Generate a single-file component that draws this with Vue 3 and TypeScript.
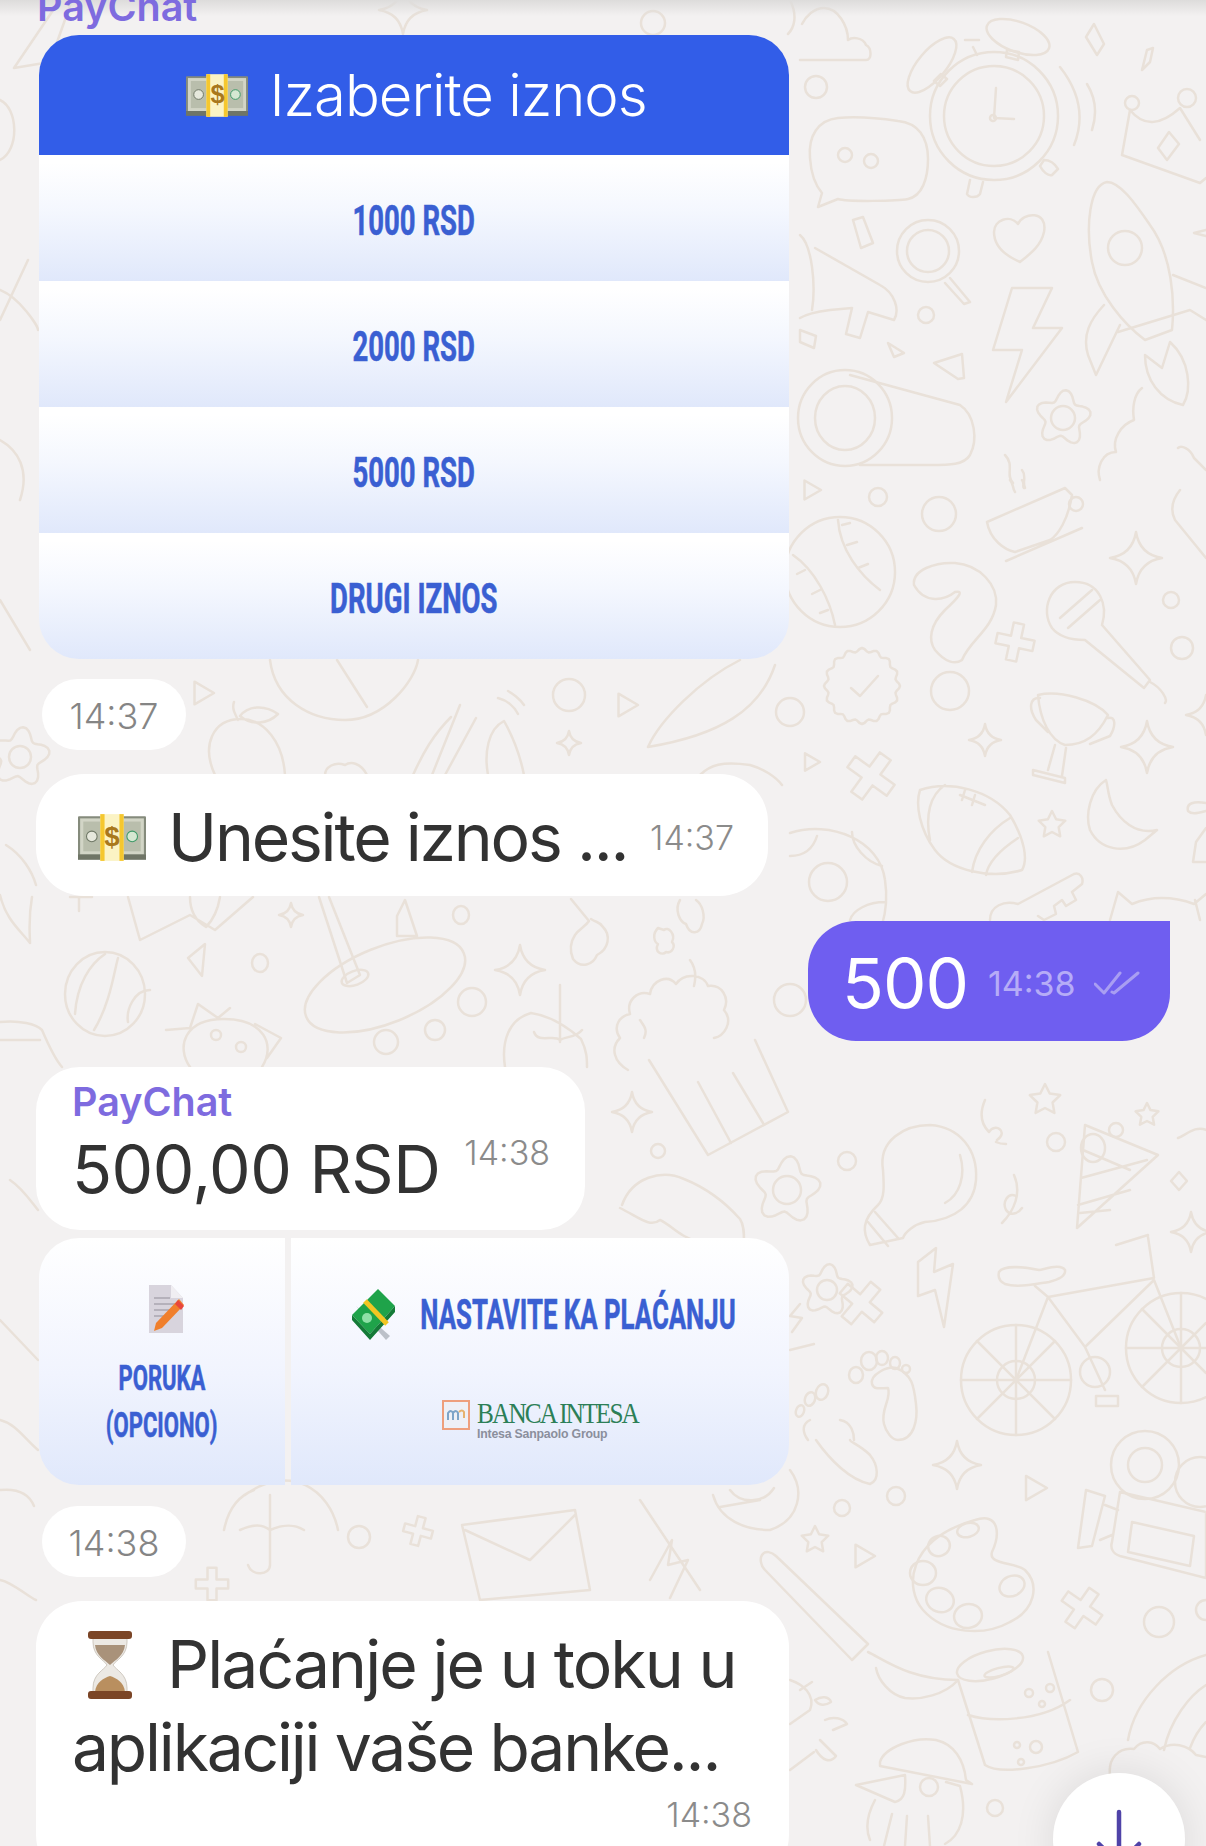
<template>
  <div class="page">
    <!-- chat wallpaper -->
    <svg class="wall" viewBox="0 0 1206 1846" width="1206" height="1846" fill="none">
      <g stroke="#e9e1d9" stroke-width="2.5" stroke-linejoin="round" stroke-linecap="round">
        <path v-for="(d, i) in doodlePaths" :key="i" :d="d" />
        <circle v-for="(c, i) in circles" :key="i" :cx="c[0]" :cy="c[1]" :r="c[2]" />
        <ellipse
          v-for="(e, i) in ellipses"
          :key="i"
          :cx="e[0]"
          :cy="e[1]"
          :rx="e[2]"
          :ry="e[3]"
          :transform="`rotate(${e[4]} ${e[0]} ${e[1]})`"
        />
      </g>
    </svg>
    <div class="top-shade"></div>

    <svg class="defs" width="0" height="0">
      <symbol id="bills" viewBox="0 0 64 44">
        <rect x="0" y="2" width="64" height="40" rx="1" fill="#858b7c" />
        <rect x="2" y="4" width="60" height="34" fill="#d2d5c6" />
        <rect x="5" y="7" width="54" height="28" fill="#b9beac" />
        <circle cx="13" cy="21" r="5" fill="#e6e8dc" stroke="#6f7866" />
        <circle cx="51" cy="21" r="5" fill="#d6e8d2" stroke="#3f9a68" />
        <rect x="0" y="38" width="64" height="5" fill="#6f7566" />
        <rect x="21" y="0" width="22" height="44" fill="#fbf3c4" />
        <rect x="21" y="0" width="4" height="44" fill="#f5c72e" />
        <rect x="39" y="0" width="4" height="44" fill="#f5c72e" />
        <text x="32" y="30" text-anchor="middle" class="dollar">$</text>
      </symbol>
    </svg>

    <div class="chat">
      <div class="sender cut">PayChat</div>

      <section class="keyboard">
        <header class="kb-head">
          <svg class="bills-sm"><use href="#bills" /></svg>
          <span>Izaberite iznos</span>
        </header>
        <div v-for="a in amounts" :key="a" class="kb-row"><span class="cond">{{ a }}</span></div>
      </section>

      <div class="pill">14:37</div>

      <div class="bubble enter">
        <svg class="bills-lg"><use href="#bills" /></svg>
        <span class="msg">Unesite iznos ...</span>
        <span class="time">14:37</span>
      </div>

      <div class="bubble out">
        <span class="msg">500</span>
        <span class="time">14:38</span>
        <svg class="checks" viewBox="0 0 46 24" width="46" height="24" fill="none">
          <path d="M1 13 L10 22 L26 2 M18 21 L20 22 L44 2" stroke="#a99ef2" stroke-width="3" stroke-linecap="round" stroke-linejoin="round" />
        </svg>
      </div>

      <div class="bubble amount">
        <div class="sender">PayChat</div>
        <div class="amount-line">
          <span class="msg">500,00 RSD</span>
          <span class="time">14:38</span>
        </div>
      </div>

      <section class="actions">
        <div class="act-left">
          <svg class="memo" viewBox="0 0 36 50" width="36" height="50">
            <path d="M1 1 H23 L35 14 V49 H1 Z" fill="#d8d4dd" />
            <path d="M23 1 L35 14 H23 Z" fill="#f0eef2" />
            <path d="M6 14 H22 M6 20 H27 M6 26 H24 M6 32 H16" stroke="#a9a5b0" stroke-width="1.6" />
            <path d="M31 15 L36 21 L14 44 L6 47 L8 39 Z" fill="#f07f2c" />
            <path d="M30 16 L36 22 L33 26 L27 20 Z" fill="#e8463c" />
          </svg>
          <span class="cond small">PORUKA</span>
          <span class="cond small second">(OPCIONO)</span>
        </div>
        <div class="act-right">
          <div class="pay-line">
            <svg viewBox="0 0 46 52" width="46" height="52">
              <path d="M6 18 L40 48 L36 52 Z" fill="#bcc1c9" />
              <path d="M28 1 L45 18 L20 46 L2 27 Z" fill="#1fa34a" />
              <path d="M45 18 L45 24 L20 52 L2 32 L2 27 L20 46 Z" fill="#147a37" />
              <path d="M15 13 L37 36" stroke="#f3c623" stroke-width="5" />
              <circle cx="17" cy="30" r="5" fill="#8fe0a6" />
            </svg>
            <span class="cond pay">NASTAVITE KA PLAĆANJU</span>
          </div>
          <div class="bank">
            <svg viewBox="0 0 28 30" width="28" height="30" fill="none">
              <rect x="1" y="1" width="26" height="28" fill="#eef0f6" stroke="#ee9f7c" stroke-width="2" />
              <path d="M6 20 V13 Q9 9 11 13 V20 M11 13 Q14 9 16 13 V20" stroke="#7ea4c8" stroke-width="2" />
              <path d="M17 12 Q20 9 22 12 V18" stroke="#e6b26e" stroke-width="2" />
            </svg>
            <div class="bank-text">
              <span class="bank-name">BANCA INTESA</span>
              <span class="bank-sub">Intesa Sanpaolo Group</span>
            </div>
          </div>
        </div>
      </section>

      <div class="pill second-pill">14:38</div>

      <div class="bubble waiting">
        <p class="msg">
          <svg class="glass" viewBox="0 0 48 70" width="48" height="70">
            <path d="M7 6 H41 V12 C41 26 30 30 27 35 C30 40 41 44 41 58 V64 H7 V58 C7 44 18 40 21 35 C18 30 7 26 7 12 Z" fill="#ece9e4" stroke="#cfc9c0" />
            <path d="M9 15 H39 C38 26 29 30 24 35 C19 30 10 26 9 15 Z" fill="#a9927a" />
            <path d="M9 62 C10 52 18 48 24 46 C30 48 38 52 39 62 Z" fill="#b98f5f" />
            <rect x="2" y="1" width="44" height="8" rx="3" fill="#7b4526" />
            <rect x="2" y="61" width="44" height="8" rx="3" fill="#7b4526" />
          </svg>
          <span class="first-line">Plaćanje je u toku u</span><br />aplikaciji vaše banke...
        </p>
        <span class="time">14:38</span>
      </div>
    </div>

    <button class="fab" type="button">
      <svg viewBox="0 0 132 132" width="132" height="132" fill="none">
        <path d="M66 39 V110 M46 71 L66 91 L86 71" stroke="#4f43a8" stroke-width="4.5" stroke-linecap="round" stroke-linejoin="round" />
      </svg>
    </button>
  </div>
</template>

<script setup lang="ts">
type Circle = [number, number, number]
type Ellipse = [number, number, number, number, number]

const amounts = ['1000 RSD', '2000 RSD', '5000 RSD', 'DRUGI IZNOS']

const fmt = (n: number) => n.toFixed(1)

function plus(x: number, y: number, s: number, deg: number): string {
  const pts = [[-5, -18], [5, -18], [5, -5], [18, -5], [18, 5], [5, 5], [5, 18], [-5, 18], [-5, 5], [-18, 5], [-18, -5], [-5, -5]]
  const t = (deg * Math.PI) / 180
  return 'M' + pts.map(([a, b]) => `${fmt(x + s * (a * Math.cos(t) - b * Math.sin(t)))} ${fmt(y + s * (a * Math.sin(t) + b * Math.cos(t)))}`).join('L') + 'Z'
}

function sparkle(x: number, y: number, r: number): string {
  const c = r * 0.14
  return `M${x} ${y - r}Q${x + c} ${y - c} ${x + r} ${y}Q${x + c} ${y + c} ${x} ${y + r}Q${x - c} ${y + c} ${x - r} ${y}Q${x - c} ${y - c} ${x} ${y - r}Z`
}

function radial(x: number, y: number, steps: number, rAt: (t: number) => number): string {
  const out: string[] = []
  for (let i = 0; i < steps; i++) {
    const t = (i / steps) * Math.PI * 2
    out.push(`${fmt(x + rAt(t) * Math.cos(t))} ${fmt(y + rAt(t) * Math.sin(t))}`)
  }
  return 'M' + out.join('L') + 'Z'
}

const star = (x: number, y: number, r: number) => {
  const out: string[] = []
  for (let i = 0; i < 10; i++) {
    const t = -Math.PI / 2 + (i * Math.PI) / 5
    const q = i % 2 ? r * 0.5 : r
    out.push(`${fmt(x + q * Math.cos(t))} ${fmt(y + q * Math.sin(t))}`)
  }
  return 'M' + out.join('L') + 'Z'
}
const flower = (x: number, y: number, r: number) => radial(x, y, 60, (t) => r * (0.82 + 0.18 * Math.cos(5 * t + 1)))
const badge = (x: number, y: number, r: number) => radial(x, y, 96, (t) => r * (0.95 + 0.05 * Math.cos(16 * t)))

const circles: Circle[] = [
  // top right
  [816, 87, 11], [994, 116, 64], [994, 116, 50], [993, 118, 3], [845, 155, 7], [871, 161, 7], [928, 251, 31], [928, 251, 21],
  [1125, 248, 17], [926, 315, 8], [1132, 103, 7], [1187, 98, 9], [1063, 418, 12],
  // middle right
  [878, 497, 9], [939, 514, 17], [840, 572, 55], [950, 691, 19], [1171, 600, 8], [1182, 648, 11], [790, 712, 14], [1076, 504, 7], [828, 882, 19],
  // lower right
  [658, 1151, 7], [847, 1161, 9], [1056, 1142, 9], [1116, 1130, 7], [787, 1190, 14], [827, 1290, 10], [1016, 1380, 55], [1016, 1380, 19], [1181, 1348, 55], [1181, 1348, 19], [1095, 1372, 15],
  [842, 1508, 8], [896, 1496, 9], [1145, 1465, 34], [1145, 1465, 17], [1200, 1482, 25], [1159, 1622, 15], [1206, 1610, 10], [1102, 1690, 11], [995, 1808, 8],
  [1029, 1693, 4], [1050, 1688, 4], [1042, 1704, 3], [1036, 1747, 6], [1017, 1745, 3], [1021, 1762, 3], [929, 1787, 9],
  // bands on the left
  [569, 695, 16], [472, 1002, 14], [386, 1042, 12], [435, 1030, 10], [790, 1000, 16], [359, 1537, 11], [653, 23, 12], [20, 757, 11], [216, 1035, 5], [241, 1047, 5]
]

const ellipses: Ellipse[] = [
  [932, 65, 34, 14, -50], [1018, 37, 33, 15, 20], [845, 418, 47, 48, 0], [845, 418, 30, 32, 0],
  [105, 994, 40, 42, 0], [385, 985, 85, 38, -22], [355, 978, 14, 7, -20], [260, 963, 8, 9, 0], [461, 915, 8, 9, 0],
  [968, 1530, 11, 7, -15], [939, 1546, 11, 10, -20], [923, 1573, 13, 12, 0], [940, 1600, 14, 12, 20], [968, 1616, 14, 12, -10], [1012, 1586, 13, 10, -25],
  [990, 1665, 34, 14, -15], [999, 1672, 15, 4, -15], [1093, 1148, 12, 14, 0],
  // toes
  [856, 1375, 7, 8, 0], [869, 1361, 8, 9, 0], [882, 1358, 6, 7, 0], [895, 1363, 5, 6, 0], [906, 1369, 4, 4, 0],
  [822, 1392, 6, 8, 20], [810, 1399, 5, 7, 20], [800, 1411, 4, 6, 20]
]

const doodlePaths: string[] = [
  // cloud, bubble, clock parts
  'M800 60H866c6 0 6-12 0-15c-3-8-14-8-18-5c0-14-10-32-24-32c-10 0-18 8-22 16',
  'M838 118c-20 2-30 18-28 40c1 15 6 28 12 35l-4 14l20-8c10 3 60 2 70 0c14-3 20-20 20-40c0-22-10-36-30-38c-20-3-40-5-60-3z',
  'M996 88L994 118L1014 119M1060 67Q1090 105 1074 145M1087 84Q1100 105 1092 130M973 47l4 8M965 40l14 0',
  'M1007 50l12 2l-1 8l-12-3zM941 74l-7 7l6 5l7-7zM970 180l-3 14c2 4 10 4 13 0l3-12M1044 160l-4 6c3 6 8 10 12 9l6-6c-3-5-8-9-14-9',
  'M1094 24l10 20l-7 11l-11-18zM1147 50l6-2l-3 14l-8 8z',
  'M1122 155L1130 110Q1150 135 1180 108L1200 140M1122 155L1200 183L1206 178M1169 132l10 12l-12 16l-9-12z',
  'M1018 224c5-12 30-14 26 8c-3 14-14 22-24 30c-14-6-26-16-26-30c0-12 16-18 24-8zM853 220l10-3l10 26l-12 5z',
  'M950 278L970 302L964 304L945 283',
  'M1012 288H1052L1033 328H1062L1006 402L1022 350H993Z',
  'M1107 182C1090 185 1085 225 1092 262C1098 295 1125 325 1145 340L1172 330C1175 300 1172 255 1150 225C1135 203 1120 182 1107 182Z',
  'M1104 305C1090 320 1082 335 1088 355L1096 375L1120 325M1173 275L1206 288M1118 332L1190 310L1206 320',
  'M1145 355L1162 368L1170 342C1190 360 1192 390 1183 405C1160 400 1145 380 1145 355Z',
  'M1142 388c-8 6-10 20-8 32c-14 5-22 20-18 32c-14 0-20 16-16 28',
  'M1206 230l-12 3l12 3M1178 448c3-3 12 0 16 10l12 12',
  // megaphone, lens tube, triangles
  'M800 235c12 10 16 50 12 75M815 248L880 285c15 8 20 25 14 35l-26-8l-8 26l-14-4l6-26L830 310C815 312 805 315 800 318',
  'M800 330l16 6l-2 12l-14-6zM850 375L960 405C975 415 978 440 970 455C964 465 950 465 930 465H860',
  'M888 343l6 14l10-4zM934 363l28-9l2 24l-6 1z',
  'M1005 455c10 10 0 20 8 28M1022 470c5 6 0 12 3 18',
  // cup, sparkle, phone
  'M987 522L1065 488L1072 495C1068 520 1058 535 1050 540L1015 552C1005 550 990 540 987 522ZM1006 561L1082 528',
  'M1010 480c4 4 2 8 5 12M1022 480c3 4 0 6 2 8M1206 558L1175 520C1170 510 1172 500 1180 490',
  // baseball, question mark, mic
  'M838 520C840 550 860 575 880 590M793 555C815 570 830 600 835 625M842 525l8-2M847 545l10-3M858 568l10-4M805 570l-8 4M820 590l-8 4M828 610l-8 3',
  'M914 585C912 570 935 562 955 563C980 565 998 585 996 605C992 630 970 640 962 660C955 665 945 662 935 650C928 640 930 625 945 610C958 598 965 590 955 592C945 600 925 605 914 585Z',
  'M1052 628C1040 610 1050 582 1075 582C1100 582 1108 605 1102 625L1150 680L1144 688L1085 640C1072 640 1060 638 1052 628ZM1060 618L1092 590M1068 628L1100 600M1150 682C1162 688 1168 700 1165 703',
  'M851 688L860 696L878 676',
  // trophy, football, moon
  'M1038 695C1060 690 1095 700 1108 715C1098 735 1085 745 1065 745C1050 740 1040 720 1038 695ZM1040 698c-10-1-12 10-4 22l12 12M1108 718c8-2 8 8 2 18l-20 8M1055 745L1048 770M1066 748L1062 776M1033 770L1065 778V783L1033 775Z',
  'M920 790C950 780 990 790 1010 815C1025 840 1028 860 1022 870C990 880 950 870 935 850C920 830 915 805 920 790ZM945 785C930 795 925 815 930 840M1010 818C990 830 975 850 972 872M1018 838C1000 850 988 862 986 875M960 795L985 805M965 790l-3 10M975 795l-3 10',
  'M1106 780C1090 790 1085 815 1090 830C1100 850 1125 855 1145 840L1157 830C1135 835 1120 820 1112 805C1108 795 1108 787 1106 780Z',
  'M1206 803c-12-2-20 0-18 8c4 4 10 2 18 0M1206 828l-10 14l-3 20h13',
  // planet, key, cat
  'M790 833C830 820 880 840 885 880C888 900 885 915 882 925M790 856c10 0 22-4 27-20M852 832c0 14 14 30 30 34M850 920c3-10 18-18 35-18',
  'M990 920c0-14 14-20 28-16l56-30c6-2 10 4 8 10l-10 8l4 8l-10 6l-4-6l-8 6l2 8l-12 6l-6-4',
  'M1110 920l8-28l14 12c20-8 40-8 62 0l12-10M1200 920l-5-20',
  // popcorn, hat, bulb
  'M649 1060L708 1155L788 1112L755 1040M698 1082L731 1143M733 1073L763 1123',
  'M628 1070c-14-8-18-22-8-32c-8-12 0-22 10-24c-4-14 8-24 20-20c2-14 18-20 26-10c8-12 28-10 32 2c14-2 22 12 16 24c10 12 0 26-10 28M640 1020c4 6 8 10 4 18M690 960c6 8 6 18 4 26',
  'M883 1170C878 1140 905 1125 930 1125C960 1127 978 1150 976 1180C974 1205 955 1220 925 1222C915 1224 905 1232 903 1238L870 1245C862 1232 862 1220 878 1205C885 1198 884 1185 883 1170ZM960 1155C966 1175 960 1195 945 1203M875 1212L898 1238M868 1222L888 1246',
  'M985 1100c-6 14-4 24 4 32c6-10 20 0 8 8M1014 1175c8 18 0 36-12 48M1016 1196c-8-4-14 6-10 14c4 6 12 4 16-2M996 1142c4 2 8 2 10 2',
  'M1077 1228L1085 1125L1158 1155ZM1083 1150L1130 1170M1081 1178L1147 1160M1078 1205L1130 1190M1080 1213L1110 1210',
  'M1179 1172l8 9l-8 9l-8-9z',
  'M1206 1130c-10-5-20 5-28 8',
  // bike
  'M999 1272c5-8 30-4 40-2c10-2 22-6 26 0c1 6-8 10-16 12c-14 2-32 6-44 2c-6-3-7-8-6-12ZM1035 1286L1048 1297L1154 1278L1148 1237M1116 1245L1148 1235M1048 1297L1085 1347L1154 1280L1181 1348M1048 1297L1016 1380M1085 1347L1105 1390M1096 1396h22v10h-22z',
  'M1016 1325V1435M961 1380H1071M977 1341L1055 1419M977 1419L1055 1341M1181 1293V1403M1126 1348H1206M1142 1309L1206 1373M1142 1387L1206 1323',
  'M918 1262L936 1248L934 1272L953 1264L944 1327L935 1290L918 1296Z',
  // feet, hotdog
  'M872 1384c2 6 8 4 16 4c4 10-8 22-4 36c2 8 8 16 14 16c16 0 20-20 18-36c-2-18-4-30-20-36c-8-2-26 6-24 16z',
  'M810 1420c-8 4-8 12-2 20M840 1420c12 2 14 14 14 20',
  'M622 1205c10-28 40-36 62-26c20 8 40 22 56 40c4 6 4 14 4 22M620 1208c20 10 30 20 40 12c10 4 20 18 40 22',
  'M800 1304l-10 12l12 2l-10 14M790 1350l24-6',
  // bottom right
  'M790 1470C805 1490 800 1520 770 1530C745 1530 720 1520 713 1495M730 1490c10 14 34 14 44-2',
  'M816 1440C830 1460 850 1480 870 1484C880 1480 878 1465 870 1455C860 1445 850 1442 850 1440',
  'M762 1555C765 1550 772 1552 776 1556L868 1644L852 1660L765 1570C760 1565 760 1558 762 1555Z',
  'M868 1652C885 1660 910 1680 958 1680C945 1695 920 1700 905 1698C890 1695 878 1680 876 1668',
  'M975 1520C1000 1512 1000 1535 992 1552C988 1565 1015 1562 1025 1570C1040 1585 1035 1610 1010 1622C985 1636 945 1635 923 1610C905 1590 905 1540 975 1520Z',
  'M1120 1492L1206 1512V1578L1120 1556C1113 1554 1110 1548 1112 1542ZM1132 1522L1194 1536L1190 1566L1128 1552ZM1086 1490L1105 1496L1092 1546L1078 1548ZM1105 1505L1118 1510M1100 1540L1112 1535',
  'M958 1680L985 1765C1000 1775 1050 1768 1078 1752L1048 1652M968 1715C990 1722 1040 1722 1070 1700',
  'M1128 1740C1135 1700 1170 1665 1206 1655M1164 1750C1170 1720 1190 1695 1206 1685M1190 1748C1195 1735 1200 1728 1206 1722',
  'M1110 1775c-2-16 8-28 24-26c8-10 20-8 26 0c12-8 28-4 36 6l10 2',
  'M790 1680c12 4 26 14 20 30l-20 14M800 1690l12-8M815 1700c6-4 14-4 16 2c-6 4-12 4-16-2M825 1720c8-4 18-2 22 4l-14 6M820 1740l16 16c-6 8-14 4-20-6M790 1770l24-18',
  'M880 1762c4-14 34-26 56-22c18 4 28 20 30 40l6 4l-92-18ZM856 1785L905 1775C906 1790 905 1800 895 1802ZM946 1782l14 4c8 30 0 50-15 58M875 1800c-8 15-10 28-5 40M884 1846l8-32M905 1846l2-30M930 1846l-2-30',
  // bands between messages
  'M270 660C275 700 310 720 345 720C385 720 415 680 418 660M337 660L367 707M648 747C660 720 700 680 740 660M775 665C760 710 720 735 648 747',
  'M215 775c-14-30-2-56 26-56c24 0 42 24 44 56M238 720c-4-8-6-12-4-18M240 716c8-10 24-12 38-2c-10 10-26 12-38 2',
  'M413 775c10-22 20-40 38-58M432 775L460 705M445 775L476 718M488 775c-4-22 0-46 16-54c8 14 16 34 20 54M498 698c8 2 16 8 20 16M508 691c4 2 12 8 16 14',
  'M325 775c0-8 10-14 20-10c6-4 16-2 22 10',
  'M700 775c10-10 22-14 50-10c14 4 26 12 32 20',
  'M128 897L140 940L190 915L215 930L253 897M190 897c0 14 6 24 16 30c8-8 12-18 14-30',
  'M0 895C6 920 20 930 30 943M32 897C28 920 30 935 30 943',
  'M79 897v14M70 897h22',
  'M105 954c-15 10-28 30-30 60M118 958c-4 14-8 46-24 72M150 990c-16 0-24 20-22 32',
  'M190 1067c-14-20-6-48 34-48c40 0 52 26 38 48M166 1030l24-2l8-24l20 14l12-10M255 1024l26 14l-14 20',
  'M0 1022c20-2 36 2 42 8c6 14 12 28 20 37M0 1040h40',
  'M319 897L347 983L360 975L329 897',
  'M188 958l17-14l-3 32z',
  'M397 916l8-16l12 36h-20z',
  'M505 1067c-4-26 4-48 26-54c14 2 32 10 50 26c6 12 6 20 6 28M560 985V1042M560 1040c-6-6-22 4-26-8M560 1040c6-4 16-2 22-10',
  'M575 935c4-6 10-8 14-14l-18-22M575 935c-4 6-6 14-2 24c8 10 20 6 24-4c12-6 14-20 6-28c-4-6-6-4-12-8',
  'M658 928c-6 6-4 14 0 16c-4 8 4 12 8 8c6 2 10-6 6-10c4-8-4-16-8-12zM680 900c-6 10 0 22 6 24c4 12 14 10 16 0c4-8 0-20-6-24',
  'M245 1495C290 1462 330 1490 338 1530M224 1530c4-20 14-34 30-40M270 1495L270 1565c0 10-18 12-22 0M240 1530c14-6 22-6 30 0c14-6 24-6 34 0',
  'M462 1525L575 1510L590 1590L480 1600ZM465 1530L530 1560L575 1515M650 1580L672 1540L668 1565L688 1560L670 1598',
  'M720 1507L760 1500M640 1500L700 1590',
  'M0 100c18 8 20 50 0 60M0 290c20 8 38 36 38 40M0 440C18 450 30 470 20 500M0 600L30 650M0 320L28 260',
  'M14 68L60 0M14 68L50 62L72 0',
  'M6 845c16 10 26 26 30 40',
  'M10 1180c12 8 20 20 28 30M0 1320L38 1360M0 1420c16 4 24 18 38 30M0 1490c20-2 30 6 34 16M0 1580c12 2 30 18 36 20',
  'M790 0c8 16 4 28-2 34',
  plus(1015, 642, 1.05, 12), plus(871, 776, 1.35, 36), plus(861, 1303, 1.25, 40), plus(1082, 1608, 1.15, 35), plus(418, 1531, 0.8, 15), plus(212, 1584, 0.9, 0),
  sparkle(1136, 558, 26), sparkle(985, 740, 16), sparkle(1147, 747, 26), sparkle(1206, 715, 20), sparkle(632, 1112, 20), sparkle(1191, 1232, 20),
  sparkle(957, 1465, 24), sparkle(569, 743, 12), sparkle(291, 915, 12), sparkle(520, 970, 25), sparkle(403, 10, 24),
  star(1052, 825, 14), star(1045, 1100, 16), star(1147, 1115, 12), star(815, 1540, 14),
  flower(1063, 418, 28), flower(787, 1190, 34), flower(827, 1290, 26), flower(20, 757, 30),
  badge(862, 686, 38),
  radial(810, 490, 3, () => 11), radial(810, 762, 3, () => 10), radial(201, 693, 3, () => 13), radial(625, 705, 3, () => 13),
  radial(1033, 1488, 3, () => 14), radial(862, 1556, 3, () => 13)
]
</script>

<style scoped>
.page {
  position: relative;
  width: 1206px;
  height: 1846px;
  overflow: hidden;
  background: #f3f1f1;
  font-family: Inter, "Liberation Sans", sans-serif;
}

.wall,
.top-shade {
  position: absolute;
  left: 0;
  top: 0;
}

.top-shade {
  width: 100%;
  height: 16px;
  background: linear-gradient(#dddcdb, rgba(243, 241, 241, 0));
}

.defs {
  position: absolute;
}

.dollar {
  font: 700 26px "Liberation Sans", sans-serif;
  fill: #a9781c;
}

.chat {
  position: relative;
  display: flex;
  flex-direction: column;
  align-items: flex-start;
}

.sender {
  color: #7e6bdf;
  font-size: 39.5px;
  font-weight: 600;
  line-height: 46px;
}

.sender.cut {
  height: 46px;
  margin: -11px 0 0 37px;
  transform: translateY(-5px);
}

.keyboard {
  width: 750px;
  margin-left: 39px;
  border-radius: 40px;
  overflow: hidden;
}

.kb-head {
  display: flex;
  align-items: center;
  justify-content: center;
  gap: 21px;
  height: 120px;
  padding-left: 5px;
  background: #325de8;
  color: #fff;
  font-size: 58px;
  font-weight: 300;
  letter-spacing: -1px;
}

.bills-sm {
  width: 62px;
  height: 43px;
}

.bills-lg {
  width: 68px;
  height: 47px;
  flex-shrink: 0;
}

.kb-row {
  display: flex;
  align-items: center;
  justify-content: center;
  height: 126px;
  padding-top: 4px;
  box-sizing: border-box;
  background: linear-gradient(#ffffff 6%, #f4f7fe 45%, #e0e8fb);
}

.cond {
  display: inline-block;
  color: #3a5fd2;
  font-family: Roboto, "Liberation Sans", sans-serif;
  font-size: 43px;
  font-weight: 700;
  white-space: nowrap;
  -webkit-text-stroke: 0.6px #3a5fd2;
  transform: scaleX(0.64);
}

.pill {
  display: flex;
  align-items: center;
  justify-content: center;
  width: 144px;
  height: 71px;
  padding-top: 3px;
  box-sizing: border-box;
  margin: 20px 0 0 42px;
  border-radius: 36px;
  background: #fff;
  color: #858585;
  font-size: 36px;
  font-weight: 300;
}

.second-pill {
  margin-top: 21px;
}

.bubble {
  background: #fff;
  color: #323232;
}

.msg {
  font-size: 66px;
  letter-spacing: -2.2px;
  white-space: nowrap;
}

.time {
  color: #8b8b8b;
  font-size: 34px;
  font-weight: 300;
}

.enter {
  display: flex;
  align-items: center;
  width: 732px;
  height: 122px;
  margin: 24px 0 0 36px;
  padding: 4px 34px 0 42px;
  box-sizing: border-box;
  border-radius: 48px;
}

.enter .msg {
  margin-left: 22px;
}

.enter .time {
  margin-left: auto;
}

.out {
  display: flex;
  align-items: center;
  align-self: flex-end;
  width: 362px;
  height: 120px;
  margin: 25px 36px 0 0;
  padding: 4px 0 0 34px;
  box-sizing: border-box;
  border-radius: 48px 0 48px 48px;
  background: #6f5ef0;
}

.out .msg {
  color: #fff;
  font-size: 69px;
  letter-spacing: -1px;
}

.out .time {
  margin-left: 20px;
  color: #b6acf7;
  font-weight: 400;
}

.checks {
  margin-left: 18px;
}

.amount {
  width: 549px;
  height: 163px;
  margin: 26px 0 0 36px;
  padding: 12px 0 0 36px;
  box-sizing: border-box;
  border-radius: 44px;
}

.amount .msg {
  letter-spacing: -0.5px;
}

.amount-line {
  display: flex;
  align-items: center;
  gap: 24px;
  margin-top: 4px;
}

.amount-line .time {
  margin-bottom: 34px;
}

.actions {
  display: flex;
  width: 750px;
  height: 247px;
  margin: 8px 0 0 39px;
  border-radius: 40px;
  overflow: hidden;
  gap: 6px;
}

.act-left,
.act-right {
  background: linear-gradient(#ffffff, #f1f4fe 55%, #e0e8fb);
}

.act-left {
  display: flex;
  flex-direction: column;
  align-items: center;
  width: 246px;
  padding-top: 46px;
  box-sizing: border-box;
}

.memo {
  margin-left: 8px;
}

.cond.small {
  margin-top: 25px;
  font-size: 35px;
  line-height: 40px;
  transform: scaleX(0.63);
}

.cond.small.second {
  margin-top: 7px;
}

.act-right {
  display: flex;
  flex: 1;
  flex-direction: column;
  align-items: center;
  padding-top: 50px;
}

.pay-line {
  display: flex;
  align-items: center;
  gap: 26px;
  margin-left: 4px;
}

.cond.pay {
  display: flex;
  justify-content: center;
  width: 312px;
  transform: scaleX(0.6);
}

.bank {
  display: flex;
  gap: 7px;
  margin-top: 60px;
}

.bank-text {
  display: flex;
  flex-direction: column;
}

.bank-name {
  display: block;
  width: 161px;
  color: #2c7f57;
  font-family: "Liberation Serif", serif;
  font-size: 29px;
  line-height: 27px;
  letter-spacing: -2.1px;
  white-space: nowrap;
  transform: scaleX(0.87);
  transform-origin: left center;
}

.bank-sub {
  color: #8b8f9c;
  font-family: "Liberation Sans", sans-serif;
  font-size: 12.3px;
  font-weight: 700;
  line-height: 14px;
  letter-spacing: -0.2px;
  white-space: nowrap;
}

.waiting {
  position: relative;
  width: 753px;
  height: 280px;
  margin: 24px 0 0 36px;
  padding: 22px 0 0 36px;
  box-sizing: border-box;
  border-radius: 46px;
}

.waiting .msg {
  margin: 0;
  line-height: 83px;
}

.first-line {
  letter-spacing: -1.9px;
}

.glass {
  vertical-align: -12px;
  margin: 0 33px 0 14px;
}

.waiting .time {
  display: block;
  margin: 5px 37px 0 0;
  text-align: right;
}

.fab {
  position: absolute;
  left: 1053px;
  top: 1773px;
  width: 132px;
  height: 132px;
  padding: 0;
  border: 0;
  border-radius: 50%;
  background: #fff;
  box-shadow: 0 0 44px rgba(0, 0, 0, 0.1);
}
</style>

<style>
html,
body {
  margin: 0;
  background: #f3f1f1;
}
</style>
